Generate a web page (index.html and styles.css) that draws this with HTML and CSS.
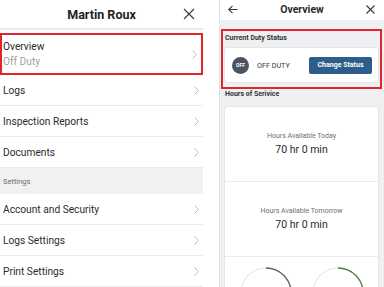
FILE: index.html
```html
<!DOCTYPE html>
<html lang="en">
<head>
  <meta charset="UTF-8" />
  <meta name="viewport" content="width=device-width, initial-scale=1.0" />
  <title>Martin Roux - Overview</title>
  <link rel="stylesheet" href="styles.css">
</head>
<body>
  <div class="page">

    <aside class="menu">
      <header class="menu-head">
        <span></span>
        <h1>Martin Roux</h1>
        <svg class="close" width="12" height="12" viewBox="0 0 12 12">
          <path d="M1 1 L11 11 M11 1 L1 11" />
        </svg>
      </header>

      <a class="row row-marked">
        <div>
          <div class="row-title">Overview</div>
          <div class="row-sub">Off Duty</div>
        </div>
        <svg class="chev" width="5" height="9" viewBox="0 0 5 9"><path d="M0.5 0.5 L4.5 4.5 L0.5 8.5" /></svg>
      </a>
      <a class="row"><span>Logs</span><svg class="chev" width="5" height="9" viewBox="0 0 5 9"><path d="M0.5 0.5 L4.5 4.5 L0.5 8.5" /></svg></a>
      <a class="row"><span>Inspection Reports</span><svg class="chev" width="5" height="9" viewBox="0 0 5 9"><path d="M0.5 0.5 L4.5 4.5 L0.5 8.5" /></svg></a>
      <a class="row"><span>Documents</span><svg class="chev" width="5" height="9" viewBox="0 0 5 9"><path d="M0.5 0.5 L4.5 4.5 L0.5 8.5" /></svg></a>
      <div class="section">Settings</div>
      <a class="row"><span>Account and Security</span><svg class="chev" width="5" height="9" viewBox="0 0 5 9"><path d="M0.5 0.5 L4.5 4.5 L0.5 8.5" /></svg></a>
      <a class="row"><span>Logs Settings</span><svg class="chev" width="5" height="9" viewBox="0 0 5 9"><path d="M0.5 0.5 L4.5 4.5 L0.5 8.5" /></svg></a>
      <a class="row"><span>Print Settings</span><svg class="chev" width="5" height="9" viewBox="0 0 5 9"><path d="M0.5 0.5 L4.5 4.5 L0.5 8.5" /></svg></a>
    </aside>

    <main class="overview">
      <header class="ov-head">
        <svg class="back" width="10" height="9" viewBox="0 0 10 9">
          <path d="M9.5 4.5 L0.8 4.5 M4.5 0.8 L0.8 4.5 L4.5 8.2" />
        </svg>
        <h1>Overview</h1>
        <svg class="close" width="9" height="9" viewBox="0 0 9 9">
          <path d="M0.5 0.5 L8.5 8.5 M8.5 0.5 L0.5 8.5" />
        </svg>
      </header>

      <section class="ov-body">
        <div class="marked">
          <h2>Current Duty Status</h2>
          <div class="card status-card">
            <span class="duty-dot">OFF</span>
            <span class="duty-text">OFF DUTY</span>
            <button class="change">Change Status</button>
          </div>
        </div>

        <h2 class="hos-title">Hours of Serivice</h2>
        <div class="card hours-card">
          <div class="hours">
            <div class="hours-label">Hours Available Today</div>
            <div class="hours-value">70 hr 0 min</div>
          </div>
          <div class="hours">
            <div class="hours-label">Hours Available Tomorrow</div>
            <div class="hours-value">70 hr 0 min</div>
          </div>
          <div class="gauges">
            <div class="gauge">
              <svg width="52" height="52" viewBox="0 0 52 52">
                <circle cx="26" cy="26" r="25" class="track" />
                <path d="M26 1 A25 25 0 0 1 51 26 A25 25 0 0 1 43.7 43.7" class="arc-dark" />
              </svg>
              <span class="gauge-label">BREAK</span>
            </div>
            <div class="gauge">
              <svg width="52" height="52" viewBox="0 0 52 52">
                <circle cx="26" cy="26" r="25" class="track" />
                <path d="M26 1 A25 25 0 0 1 51 26 A25 25 0 0 1 43.7 43.7" class="arc-green" />
              </svg>
              <span class="gauge-label">DRIVE</span>
            </div>
          </div>
        </div>
      </section>
    </main>

  </div>
</body>
</html>
```

FILE: styles.css
```css
body {
  margin: 0;
  width: 384px;
  height: 287px;
  overflow: hidden;
  background-color: #fff;
  font-family: Roboto, "Liberation Sans", sans-serif;
  color: #2b2b2b;
}

.page {
  display: flex;
  height: 287px;
}

/* menu a esquerda */

.menu {
  width: 203px;
  flex-shrink: 0;
}

.menu-head {
  display: grid;
  grid-template-columns: 1fr auto 1fr;
  align-items: center;
  height: 28px;
  border-bottom: 2px solid #e9e9e9;
}

.menu-head h1 {
  margin: 0;
  font-size: 12.5px;
  font-weight: 700;
  color: #222;
}

.menu-head .close {
  justify-self: end;
  margin-right: 8px;
}

.close path,
.back path {
  fill: none;
  stroke: #3a3a3a;
  stroke-width: 1.1;
}

.row {
  display: flex;
  align-items: center;
  justify-content: space-between;
  height: 30px;
  padding: 0 4px 0 3px;
  border-bottom: 1px solid #ececec;
  font-size: 10.2px;
  color: #2b2b2b;
  text-decoration: none;
}

.row-marked {
  height: 38px;
  margin-top: 3px;
  padding-left: 1px;
  border: 2px solid #e3242b;
}

.row-title {
  line-height: 14px;
}

.row-sub {
  margin-top: 1px;
  line-height: 14px;
  color: #a0a0a0;
}

.chev path {
  fill: none;
  stroke: #b4b4b4;
  stroke-width: 0.9;
}

.section {
  display: flex;
  align-items: center;
  height: 26px;
  padding-left: 3px;
  background-color: #f0f1f3;
  font-size: 7.5px;
  color: #6b6b6b;
}

/* tela de overview */

.overview {
  flex: 1;
  margin-left: 16px;
  border-left: 1px solid #cfe7ec;
  background-color: #eef0f2;
}

.ov-head {
  display: grid;
  grid-template-columns: 1fr auto 1fr;
  align-items: center;
  height: 19px;
  background-color: #fff;
  padding-bottom: 1px;
}

.ov-head h1 {
  margin: 0;
  font-size: 10.5px;
  font-weight: 700;
  color: #2a2a2a;
}

.ov-head .back {
  margin-left: 8px;
}

.ov-head .close {
  justify-self: end;
  margin-right: 9px;
}

.ov-body {
  padding: 9px 2px 0 1px;
}

.ov-body h2 {
  margin: 0;
  font-size: 7px;
  font-weight: 700;
  line-height: 10px;
  color: #333;
}

.marked {
  border: 2px solid #e3242b;
  padding: 0 2px 5px;
}

.ov-body .marked h2 {
  margin: 2px 0 5px;
}

.card {
  background-color: #fff;
  border-radius: 3px;
  box-shadow: 0 0 0 1px #e3e5e8;
}

.status-card {
  display: flex;
  align-items: center;
  height: 34px;
  padding: 0 6px 0 7px;
}

.duty-dot {
  display: flex;
  align-items: center;
  justify-content: center;
  width: 17px;
  height: 17px;
  border-radius: 50%;
  background-color: #4a5560;
  color: #fff;
  font-size: 5px;
  font-weight: 700;
}

.duty-text {
  flex: 1;
  margin-left: 8px;
  font-size: 7.2px;
  color: #333;
}

.change {
  width: 63px;
  height: 17px;
  padding: 0;
  border: none;
  border-radius: 2px;
  background-color: #2d5d89;
  color: #fff;
  font-family: Roboto, "Liberation Sans", sans-serif;
  font-size: 7px;
  font-weight: 700;
}

.ov-body .hos-title {
  margin: 0 0 8px;
  padding-left: 4px;
}

.hours-card {
  margin: 0 4px;
}

.hours {
  display: flex;
  flex-direction: column;
  align-items: center;
  justify-content: center;
  height: 74px;
  border-bottom: 1px solid #ececec;
}

.hours-label {
  font-size: 7px;
  color: #6f6f6f;
}

.hours-value {
  margin-top: 3px;
  font-size: 10.5px;
  color: #2b2b2b;
}

.gauges {
  display: flex;
  justify-content: center;
  gap: 20px;
  padding-top: 10px;
  height: 60px;
}

.gauge {
  display: grid;
  justify-items: center;
}

.gauge svg,
.gauge-label {
  grid-area: 1 / 1;
}

.gauge-label {
  margin-top: 21px;
  font-size: 5.5px;
  font-weight: 700;
  color: #555;
}

.track {
  fill: none;
  stroke: #e4e5e7;
  stroke-width: 1.1;
}

.arc-dark {
  fill: none;
  stroke: #5d6065;
  stroke-width: 1.3;
}

.arc-green {
  fill: none;
  stroke: #4f7b44;
  stroke-width: 1.3;
}
```
